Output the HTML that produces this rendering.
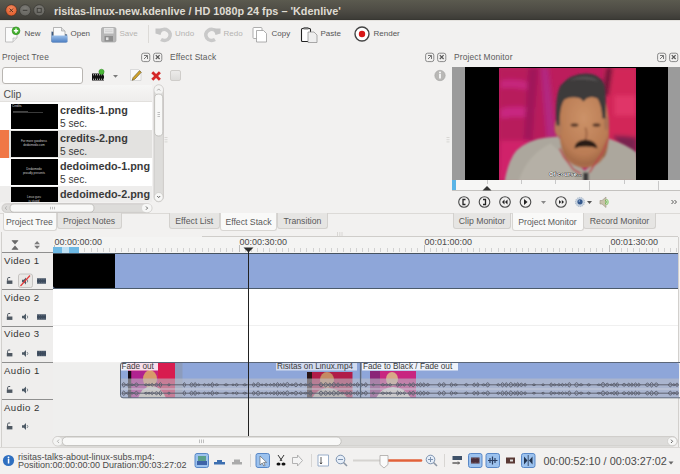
<!DOCTYPE html>
<html><head><meta charset="utf-8">
<style>
*{box-sizing:border-box;margin:0;padding:0}
html,body{width:680px;height:474px;overflow:hidden;background:#f2f1f0;font-family:"Liberation Sans",sans-serif;color:#3c3c3c}
.a{position:absolute}
.t{position:absolute;white-space:nowrap;line-height:1}
#title{left:0;top:0;width:680px;height:19.5px;background:linear-gradient(#5b5a4f,#4d4b44 55%,#3d3c37 95%,#33322e);}
.wb{position:absolute;top:5px;width:12px;height:12px;border-radius:50%}
.tb{font-size:8px;color:#555}
.dis{color:#b5b3b0}
.dh{font-size:8.4px;color:#5b5b5b;letter-spacing:.15px}
.dbtn{position:absolute;width:8px;height:8px;border:1px solid #8d8d8d;border-radius:2px;background:#eeedec}
.tab{position:absolute;height:16px;border:1px solid #d3d1ce;border-top:none;background:#e6e5e3;border-radius:0 0 3px 3px;font-size:8.7px;color:#5a5a5a;text-align:center;line-height:15px;padding-top:.5px}
.tab.sel{background:#f9f9f8;height:18px;line-height:16.5px;border-color:#d8d6d3}
.trk{position:absolute;left:0;width:678px}
.th{position:absolute;left:2px;width:51px;background:#efeeed}
.tn{font-size:9.6px;color:#333;left:4px;letter-spacing:.45px}
.fn{font-size:10.8px;font-weight:bold;color:#3a3a3a}
.fs{font-size:10.2px;color:#3a3a3a}
.rt{font-size:9px;color:#4a4a4a}
.st{font-size:9px;color:#4a4a4a}
.cl{font-size:8.2px;color:#3a3a3a}
.sep{position:absolute;background:#8f8f8f;height:1px}
</style></head><body>
<!-- title bar -->
<div id="title" class="a">
  <svg class="a" style="left:0;top:0" width="50" height="20" viewBox="0 0 50 20">
  <defs><radialGradient id="cg" cx="50%" cy="35%" r="65%"><stop offset="0" stop-color="#f38a60"/><stop offset="1" stop-color="#e05a28"/></radialGradient>
  <radialGradient id="gg" cx="50%" cy="35%" r="65%"><stop offset="0" stop-color="#7d7c77"/><stop offset="1" stop-color="#64635e"/></radialGradient></defs>
  <circle cx="11.3" cy="10.3" r="5.6" fill="url(#cg)" stroke="#3a2a22" stroke-width=".6"/>
  <path d="M9.6 8.6l3.4 3.4M13 8.6l-3.4 3.4" stroke="#4a2a1a" stroke-width=".9"/>
  <circle cx="25.1" cy="10.3" r="5.6" fill="url(#gg)" stroke="#33322e" stroke-width=".6"/>
  <path d="M22.8 10.3h4.6" stroke="#3a3935" stroke-width="1"/>
  <circle cx="39.2" cy="10.3" r="5.6" fill="url(#gg)" stroke="#33322e" stroke-width=".6"/>
  <rect x="37.2" y="8.3" width="4" height="4" fill="none" stroke="#3a3935" stroke-width=".9"/>
</svg>
  <div class="t" style="left:54px;top:6px;font-size:10.85px;font-weight:bold;color:#dfdbd2">risitas-linux-new.kdenlive / HD 1080p 24 fps – 'Kdenlive'</div>
</div>
<div class="a" style="left:0;top:19.5px;width:680px;height:1.5px;background:#e4e2de"></div>

<!-- toolbar -->
<svg class="a" style="left:0;top:20px" width="420" height="27" viewBox="0 20 420 27">
 <!-- New -->
 <path d="M5.5 27.5h11.5v10.5l-4 4h-7.5z" fill="#fbfbfb" stroke="#b9b9b9" stroke-width=".9"/><path d="M13 42v-4h4" fill="#e8e8e8" stroke="#b9b9b9" stroke-width=".7"/>
 <circle cx="16" cy="30.8" r="3.9" fill="#45b030" stroke="#2a8a1a" stroke-width=".6"/>
 <path d="M13.8 30.8h4.4M16 28.6v4.4" stroke="#fff" stroke-width="1.4"/>
 <!-- Open -->
 <defs><linearGradient id="fg" x1="0" y1="0" x2="0" y2="1"><stop offset="0" stop-color="#9cc0ea"/><stop offset="1" stop-color="#4a7cc0"/></linearGradient></defs>
 <path d="M51.5 31.5v9.5q0 1.3 1.3 1.3h13q1.3 0 1.3-1.3v-6.5z" fill="#3c5a80"/>
 <path d="M53.5 27.5h8l3.5 3.5v6h-11.5z" fill="#fafafa" stroke="#9a9a9a" stroke-width=".7"/>
 <path d="M61.5 27.5v3.5h3.5" fill="#ddd" stroke="#9a9a9a" stroke-width=".6"/>
 <path d="M51.5 35.5h16v5.7q0 1.3-1.3 1.3h-13.4q-1.3 0-1.3-1.3z" fill="url(#fg)"/>
 <!-- Save -->
 <rect x="101.5" y="27.5" width="14.5" height="14.5" rx="1.5" fill="#b6b6b6" stroke="#a8a8a8" stroke-width=".7"/>
 <rect x="104" y="28" width="9.5" height="5.5" fill="#e6e6e6"/>
 <path d="M105 29.8h7.5M105 31.6h7.5" stroke="#c0c0c0" stroke-width=".5"/>
 <rect x="104.5" y="36" width="8.5" height="5.5" fill="#8e8e8e"/>
 <rect x="106" y="37.3" width="2.5" height="2.8" fill="#e0e0e0"/>
 <!-- sep -->
 <rect x="148" y="25" width="1" height="18" fill="#dcdad7"/>
 <!-- Undo -->
 <path d="M159.5 31.5a6 5.5 0 1 1 1.5 8" fill="none" stroke="#c9c9c9" stroke-width="3.6"/>
 <path d="M155.5 28.5h7l-2 6.5-5-1.5z" fill="#c4c4c4"/>
 <!-- Redo -->
 <path d="M216.5 31.5a6 5.5 0 1 0 -1.5 8" fill="none" stroke="#c9c9c9" stroke-width="3.6"/>
 <path d="M220.5 28.5h-7l2 6.5 5-1.5z" fill="#c4c4c4"/>
 <!-- Copy -->
 <rect x="253" y="27.5" width="9" height="11" rx="1" fill="#fff" stroke="#9a9a9a" stroke-width=".8"/>
 <path d="M256.5 30.5h7l3 3v8.5h-10z" fill="#fff" stroke="#9a9a9a" stroke-width=".8"/>
 <!-- Paste -->
 <rect x="301.5" y="28.5" width="9" height="13" rx="1" fill="#fff" stroke="#222" stroke-width="1.1"/>
 <rect x="303.5" y="27" width="5" height="2.5" fill="#777"/>
 <path d="M308 32h6l3 3v7.5h-9z" fill="#eee" stroke="#888" stroke-width=".7"/>
 <!-- Render -->
 <circle cx="362" cy="34" r="7" fill="#fff" stroke="#444" stroke-width="1.4"/>
 <circle cx="362" cy="34" r="3.2" fill="#d81818"/>
</svg>
<div class="t tb" style="left:24.5px;top:30px">New</div>
<div class="t tb" style="left:70.5px;top:30px">Open</div>
<div class="t tb dis" style="left:119.5px;top:30px">Save</div>
<div class="t tb dis" style="left:175px;top:30px">Undo</div>
<div class="t tb dis" style="left:223.5px;top:30px">Redo</div>
<div class="t tb" style="left:271.5px;top:30px">Copy</div>
<div class="t tb" style="left:320.5px;top:30px">Paste</div>
<div class="t tb" style="left:373.5px;top:30px">Render</div>

<!-- dock headers -->
<div class="t dh" style="left:2px;top:53px">Project Tree</div>
<svg class="a" style="left:140.5px;top:52px" width="10" height="11" viewBox="0 0 10 11"><rect x=".6" y="1.2" width="8.2" height="8.4" rx="2" fill="none" stroke="#8a8a8a" stroke-width="1"/><path d="M3 3.5h3.5v3.5M6.5 3.5l-3.5 3.5" fill="none" stroke="#777" stroke-width="1"/></svg><svg class="a" style="left:153px;top:52px" width="10" height="11" viewBox="0 0 10 11"><rect x=".6" y="1.2" width="8.2" height="8.4" rx="2" fill="none" stroke="#8a8a8a" stroke-width="1"/><path d="M2.8 3.2l3.8 3.8M6.6 3.2l-3.8 3.8" fill="none" stroke="#555" stroke-width="1.2"/></svg>
<div class="t dh" style="left:170px;top:53px">Effect Stack</div>
<svg class="a" style="left:424.5px;top:52px" width="10" height="11" viewBox="0 0 10 11"><rect x=".6" y="1.2" width="8.2" height="8.4" rx="2" fill="none" stroke="#8a8a8a" stroke-width="1"/><path d="M3 3.5h3.5v3.5M6.5 3.5l-3.5 3.5" fill="none" stroke="#777" stroke-width="1"/></svg><svg class="a" style="left:437px;top:52px" width="10" height="11" viewBox="0 0 10 11"><rect x=".6" y="1.2" width="8.2" height="8.4" rx="2" fill="none" stroke="#8a8a8a" stroke-width="1"/><path d="M2.8 3.2l3.8 3.8M6.6 3.2l-3.8 3.8" fill="none" stroke="#555" stroke-width="1.2"/></svg>
<div class="t dh" style="left:454px;top:53px">Project Monitor</div>
<svg class="a" style="left:656.5px;top:52px" width="10" height="11" viewBox="0 0 10 11"><rect x=".6" y="1.2" width="8.2" height="8.4" rx="2" fill="none" stroke="#8a8a8a" stroke-width="1"/><path d="M3 3.5h3.5v3.5M6.5 3.5l-3.5 3.5" fill="none" stroke="#777" stroke-width="1"/></svg><svg class="a" style="left:669px;top:52px" width="10" height="11" viewBox="0 0 10 11"><rect x=".6" y="1.2" width="8.2" height="8.4" rx="2" fill="none" stroke="#8a8a8a" stroke-width="1"/><path d="M2.8 3.2l3.8 3.8M6.6 3.2l-3.8 3.8" fill="none" stroke="#555" stroke-width="1.2"/></svg>
<!-- search -->
<div class="a" style="left:1.5px;top:67px;width:81px;height:16.5px;background:#fff;border:1px solid #b9b6b2;border-radius:3px"></div>
<svg class="a" style="left:88px;top:66px" width="76" height="18" viewBox="88 66 76 18">
 <rect x="92" y="73.5" width="12" height="7" fill="#111"/>
 <rect x="93.0" y="74.3" width="1" height="1" fill="#ddd"/><rect x="93.0" y="78.7" width="1" height="1" fill="#ddd"/><rect x="95.0" y="74.3" width="1" height="1" fill="#ddd"/><rect x="95.0" y="78.7" width="1" height="1" fill="#ddd"/><rect x="97.0" y="74.3" width="1" height="1" fill="#ddd"/><rect x="97.0" y="78.7" width="1" height="1" fill="#ddd"/><rect x="99.0" y="74.3" width="1" height="1" fill="#ddd"/><rect x="99.0" y="78.7" width="1" height="1" fill="#ddd"/><rect x="101.0" y="74.3" width="1" height="1" fill="#ddd"/><rect x="101.0" y="78.7" width="1" height="1" fill="#ddd"/><rect x="103.0" y="74.3" width="1" height="1" fill="#ddd"/><rect x="103.0" y="78.7" width="1" height="1" fill="#ddd"/>
 <circle cx="101.5" cy="71.8" r="2.6" fill="#4cb83a" stroke="#2f8a22" stroke-width=".5"/>
 <path d="M113 75h5l-2.5 2.8z" fill="#7a7a7a"/>
 <path d="M130.5 69.5h8l2.5 2.5v8.5h-10.5z" fill="#fafafa" stroke="#c8c8c8" stroke-width=".6"/>
 <path d="M132.2 80.3l.8-2.6 6.5-7 1.8 1.6-6.6 7z" fill="#d4a52a" stroke="#5a4a1a" stroke-width=".6"/>
 <path d="M152.3 72.2l7.6 7.6M159.9 72.2l-7.6 7.6" stroke="#d42828" stroke-width="2.8"/>
</svg>
<!-- tree -->
<div class="a" style="left:0;top:85px;width:163px;height:118px;background:#fff"></div>
<div class="a" style="left:0;top:85px;width:152px;height:17px;background:linear-gradient(#f6f6f5,#eeedec);border-bottom:1px solid #e2e0dd"></div>
<div class="t" style="left:3.5px;top:90px;font-size:10.4px;color:#4f4f4f">Clip</div>

<!-- rows -->
<div class="a" style="left:0;top:130px;width:152px;height:28px;background:#e3e2e0"></div>
<div class="a" style="left:0;top:186px;width:152px;height:17px;background:#eeedec"></div>
<div class="a" style="left:0;top:130px;width:9px;height:28px;background:#f07746"></div>
<div class="a" style="left:11px;top:103.5px;width:46.5px;height:25px;background:#000"></div>
<div class="a" style="left:11px;top:131px;width:46.5px;height:26px;background:#000"></div>
<div class="a" style="left:11px;top:159px;width:46.5px;height:26px;background:#000"></div>
<div class="a" style="left:11px;top:187px;width:46.5px;height:15px;background:#000"></div>
<div class="t" style="left:12px;top:105px;font-size:3px;color:#ddd">Credits</div>
<div class="a" style="left:13px;top:110.5px;width:15px;height:1px;background:#444"></div>
<div class="a" style="left:13px;top:112px;width:30px;height:1px;background:#3a3a3a"></div>
<div class="t" style="left:34px;top:140px;font-size:3px;color:#ccc;text-align:center;transform:translateX(-50%);line-height:1.3">For more goodness<br>dedoimedo.com</div>
<div class="t" style="left:34px;top:168px;font-size:3px;color:#ccc;text-align:center;transform:translateX(-50%);line-height:1.3">Dedoimedo<br>proudly presents</div>
<div class="t" style="left:34px;top:196px;font-size:3px;color:#ccc;text-align:center;transform:translateX(-50%);line-height:1.3">Linux guru<br>is stupid</div>
<div class="t fn" style="left:60px;top:105px">credits-1.png</div>
<div class="t fs" style="left:60px;top:119px">5 sec.</div>
<div class="t fn" style="left:60px;top:133px">credits-2.png</div>
<div class="t fs" style="left:60px;top:147px">5 sec.</div>
<div class="t fn" style="left:60px;top:161px">dedoimedo-1.png</div>
<div class="t fs" style="left:60px;top:175px">5 sec.</div>
<div class="t fn" style="left:60px;top:189px">dedoimedo-2.png</div>
<div class="a" style="left:1px;top:202px;width:162px;height:11px;background:#f2f1f0"></div>
<!-- vscroll -->
<div class="a" style="left:152px;top:84px;width:12px;height:119px;background:#f2f1f0"></div>
<svg class="a" style="left:150px;top:82px" width="16" height="133" viewBox="150 82 16 133">
 <rect x="154" y="84.8" width="9.4" height="117" rx="4.7" fill="#dddcda" stroke="#c6c4c1" stroke-width=".8"/>
 <rect x="154.4" y="85.2" width="8.6" height="9" rx="4.3" fill="#f4f4f3"/>
 <path d="M157.2 90.5l1.5-1.6 1.5 1.6" fill="none" stroke="#888" stroke-width=".7"/>
 <rect x="154.4" y="192.5" width="8.6" height="9" rx="4.3" fill="#f7f7f6" stroke="#c6c4c1" stroke-width=".6"/>
 <path d="M157.2 196l1.5 1.6 1.5-1.6" fill="none" stroke="#555" stroke-width=".9"/>
 <rect x="154.6" y="94" width="8.2" height="42" rx="4.1" fill="#f8f8f7" stroke="#b9b7b4" stroke-width=".8"/>
 <path d="M157.5 112.5h2.5M157.5 114.5h2.5M157.5 116.5h2.5" stroke="#999" stroke-width=".6"/>
 </svg><svg class="a" style="left:0;top:200px" width="154" height="15" viewBox="0 200 154 15">
 <rect x="2" y="203.8" width="150" height="8.6" rx="4.3" fill="#dddcda" stroke="#c6c4c1" stroke-width=".8"/>
 <rect x="142" y="204" width="9.6" height="8.2" rx="4.1" fill="#f7f7f6"/>
 <path d="M146 206.5l1.6 1.6-1.6 1.6" fill="none" stroke="#555" stroke-width=".9"/>
 <path d="M6.8 206.5l-1.6 1.6 1.6 1.6" fill="none" stroke="#999" stroke-width=".7"/>
 <rect x="10" y="204" width="84" height="8.2" rx="4.1" fill="#f8f8f7" stroke="#b9b7b4" stroke-width=".8"/>
 <path d="M50.5 206.8v2.6M52.5 206.8v2.6M54.5 206.8v2.6" stroke="#999" stroke-width=".6"/>
</svg>
<!-- effect stack -->
<div class="a" style="left:170px;top:70px;width:11px;height:10.5px;border:1px solid #cfcdca;border-radius:2px;background:linear-gradient(#ecebea,#dddcda)"></div>
<svg class="a" style="left:433px;top:69px" width="14" height="13" viewBox="433 69 14 13">
 <circle cx="440" cy="75.5" r="5.2" fill="#b9b8b6" stroke="#a5a4a2" stroke-width=".6"/>
 <rect x="439.2" y="74" width="1.6" height="4.5" fill="#fff"/>
 <circle cx="440" cy="72.5" r=".9" fill="#fff"/>
</svg>
<!-- monitor -->
<div class="a" style="left:452px;top:67px;width:228px;height:113px;background:#9b9b9b"></div>
<div class="a" style="left:465px;top:67px;width:202.5px;height:113px;background:#000"></div>

<svg class="a" style="left:498.5px;top:67.5px" width="137.5" height="112.5" viewBox="498.5 67.5 137.5 112.5">
 <defs>
  <filter id="vb" x="-20%" y="-20%" width="140%" height="140%"><feGaussianBlur stdDeviation="2.2"/></filter>
  <filter id="vb2" x="-20%" y="-20%" width="140%" height="140%"><feGaussianBlur stdDeviation=".8"/></filter>
  <radialGradient id="skin" cx="50%" cy="35%" r="65%"><stop offset="0" stop-color="#cc9268"/><stop offset=".75" stop-color="#ba7c54"/><stop offset="1" stop-color="#9c6444"/></radialGradient>
  <clipPath id="vc"><rect x="498.5" y="67.5" width="137.5" height="112.5"/></clipPath>
 </defs>
 <g clip-path="url(#vc)">
 <rect x="498" y="67" width="139" height="114" fill="#bc1d5c"/>
 <g filter="url(#vb)">
  <path d="M498 67h50v113h-50z" fill="#b81a5c"/>
  <path d="M500 80q15-3 30 2l-2 8q-14-4-28-2z" fill="#cc2c8c" opacity=".7"/>
  <path d="M500 108q15-4 35 0l-2 10q-16-3-33 0z" fill="#cf2e90" opacity=".7"/>
  <path d="M528 67h10l-8 90h-8z" fill="#a0185a"/>
  <path d="M540 67h8l8 70h-10z" fill="#b02a8a" opacity=".8"/>
  <path d="M500 140h30l-5 40h-27z" fill="#d0206a"/>
  <path d="M604 67h32v113h-32z" fill="#d22858"/>
  <path d="M606 67l6 0-4 28-6 0z" fill="#6a1838"/>
  <path d="M614 95h22v20h-22z" fill="#e03468"/>
  <path d="M612 135q14 0 24 2v20h-10z" fill="#7a2050"/>
 </g>
 <g filter="url(#vb2)">
  <!-- sweater -->
  <path d="M504 181q4-22 12-31q12-11 30-13l12-1l10 20l16 14l12-8l12-24q18 6 28 14l2 29z" fill="#aca79d"/>
  <path d="M518 181q8-26 32-38l14 12 12 26z" fill="#b5b0a6"/>
  <!-- face -->
  <path d="M558 100q10-8 26-8q15 0 21 8q4 16 3.5 34q-.5 16-4 22q-8 10-20 10q-13 0-20-10q-4-6-5.5-20q-1.5-18 0-36z" fill="url(#skin)"/>
  <ellipse cx="558" cy="127" rx="4" ry="9" fill="#b47a58"/>
  <ellipse cx="606" cy="123" rx="2.5" ry="7" fill="#a87252"/>
  <!-- hair -->
  <path d="M556 125q-2-28 4-40q10-12 26-12q13 0 18 11q2 12 1 34l-3 0q-1-14-5-20q-6-3-11 0l-3 3l-3-3q-9-3-16 1q-5 6-5 26z" fill="#3d3a3b"/>
  <path d="M568 80q8-4 18-4q9 1 12 5q-9-2-16-2q-8 0-14 1z" fill="#6a6868" opacity=".5"/>
  <!-- eyes -->
  <ellipse cx="574" cy="124.5" rx="4" ry="1.8" fill="#5a3a2a"/>
  <ellipse cx="596" cy="124.5" rx="4" ry="1.8" fill="#5a3a2a"/>
  <path d="M585 127q2 7 0 12" stroke="#a46a48" stroke-width="2.2" fill="none"/>
  <!-- mustache -->
  <path d="M574 148q0-8 11-9q11 1 12 9q-4-2-12-2q-7 0-11 2z" fill="#2a1d19"/>
  <path d="M566 156q7 10 18 10q12 0 18-10" stroke="#aa6e4c" stroke-width="3" fill="none"/>
  <!-- collar -->
  <path d="M559 148l4 8 10 13 7 4M608 138l-6 14-13 20" stroke="#b8404a" stroke-width="1.5" fill="none"/>
  <rect x="582.5" y="172" width="5.5" height="9" fill="#3a3a3a"/>
 </g>
 <text x="548.5" y="175.2" font-family="Liberation Sans" font-size="6.2" font-weight="bold" fill="#fff" stroke="#111" stroke-width=".7" paint-order="stroke" textLength="33" lengthAdjust="spacingAndGlyphs">Of course...</text>
 </g>
</svg>

<!-- monitor ruler -->
<div class="a" style="left:452px;top:180px;width:228px;height:10.5px;background:#f6f6f5;border-bottom:1px solid #c4c2bf"></div>
<div class="a" style="left:452px;top:180px;width:4px;height:10px;background:#5ab4e6"></div>
<div class="a" style="left:486.5px;top:180px;width:1px;height:4px;background:#c8c8c8"></div>
<div class="a" style="left:521px;top:180px;width:1px;height:4px;background:#c8c8c8"></div>
<div class="a" style="left:555px;top:180px;width:1px;height:4px;background:#c8c8c8"></div>
<div class="a" style="left:589px;top:181px;width:1px;height:8.5px;background:#c8c8c8"></div>
<div class="a" style="left:624px;top:180px;width:1px;height:4px;background:#c8c8c8"></div>
<div class="a" style="left:658px;top:181px;width:1px;height:8.5px;background:#c8c8c8"></div>
<svg class="a" style="left:480px;top:184px" width="14" height="7" viewBox="480 184 14 7"><path d="M482.5 190.5l4.5-4.5 4.5 4.5z" fill="#333"/></svg>
<!-- monitor buttons -->
<svg class="a" style="left:452px;top:192px" width="228" height="20" viewBox="452 192 228 20">
 <g fill="none" stroke="#4a4a4a" stroke-width="1.1">
  <circle cx="464" cy="202" r="5.3"/><circle cx="484.5" cy="202" r="5.3"/><circle cx="505" cy="202" r="5.3"/><circle cx="525.5" cy="202" r="5.3"/><circle cx="561" cy="202" r="5.3"/>
 </g>
 <path d="M465.5 199.5h-2.5v5h2.5" fill="none" stroke="#222" stroke-width="1.3"/>
 <path d="M483 199.5h2.5v5h-2.5" fill="none" stroke="#222" stroke-width="1.3"/>
 <path d="M504.5 199.5l-2.5 2.5 2.5 2.5zM507.5 199.5l-2.5 2.5 2.5 2.5z" fill="#222"/>
 <path d="M524 199l3.5 3-3.5 3z" fill="#222"/>
 <path d="M541 201h5l-2.5 3z" fill="#888"/>
 <path d="M559 200l2.2 2-2.2 2zM561.8 200l2.2 2-2.2 2z" fill="#222"/>
 <circle cx="580" cy="202" r="4.6" fill="#c4d0de" stroke="#9fb0c4" stroke-width=".8" stroke-dasharray="1.2 .8"/><circle cx="580" cy="201.8" r="2.6" fill="#34588c"/><circle cx="579.3" cy="201" r=".8" fill="#9ab4d8"/>
 <path d="M587 201h5l-2.5 3z" fill="#555"/>
 <path d="M600 200.5h2l4-3.5v10.5l-4-3.5h-2z" fill="#c9c2ab" stroke="#9a9484" stroke-width=".6"/>
 <path d="M605 200a2.2 2.2 0 0 1 0 4M606.5 199a3.6 3.6 0 0 1 0 6" fill="none" stroke="#62c040" stroke-width=".9"/>
 <path d="M671.5 200l2 2-2 2M674.5 200l2 2-2 2" fill="none" stroke="#444" stroke-width=".9"/>
</svg>
<!-- tabs -->
<div class="a" style="left:0;top:212.5px;width:680px;height:1px;background:#dcdad7"></div>
<div class="tab sel" style="left:2.5px;top:213px;width:54px">Project Tree</div>
<div class="tab" style="left:56.5px;top:213px;width:65px">Project Notes</div>
<div class="tab" style="left:168.5px;top:213px;width:51.5px">Effect List</div>
<div class="tab sel" style="left:220px;top:213px;width:57px">Effect Stack</div>
<div class="tab" style="left:277px;top:213px;width:51px">Transition</div>
<div class="tab" style="left:453px;top:213px;width:58px">Clip Monitor</div>
<div class="tab sel" style="left:511.5px;top:213px;width:72px">Project Monitor</div>
<div class="tab" style="left:583px;top:213px;width:73px">Record Monitor</div>


<svg class="a" style="left:0;top:0" width="680" height="474" viewBox="0 0 680 474" style="pointer-events:none">
 <path d="M337.5 232v7M339.8 232v7M342 232v7" stroke="#d2d0cd" stroke-width=".8"/>
 <path d="M164.5 137.5h3M164.5 139.7h3M164.5 141.9h3" stroke="#d2d0cd" stroke-width=".8"/>
 <path d="M446.5 137.5h3M446.5 139.7h3M446.5 141.9h3" stroke="#d2d0cd" stroke-width=".8"/>
</svg>
<!-- timeline -->
<div class="a" style="left:202px;top:236px;width:476px;height:1px;background:#cfcdca"></div>
<div class="a" style="left:53px;top:237px;width:625px;height:15.5px;background:#f4f4f3"></div>
<div class="a" style="left:1px;top:232px;width:1px;height:215px;background:#d2d0cd"></div>
<div class="a" style="left:677.5px;top:237px;width:1px;height:210px;background:#d2d0cd"></div>
<div class="a" style="left:53.50px;top:245px;width:1px;height:7px;background:#bdbdbd"></div>
<div class="a" style="left:59.67px;top:248px;width:1px;height:4px;background:#d2d2d2"></div>
<div class="a" style="left:65.83px;top:248px;width:1px;height:4px;background:#d2d2d2"></div>
<div class="a" style="left:72.00px;top:248px;width:1px;height:4px;background:#d2d2d2"></div>
<div class="a" style="left:78.17px;top:248px;width:1px;height:4px;background:#d2d2d2"></div>
<div class="a" style="left:84.33px;top:248px;width:1px;height:4px;background:#d2d2d2"></div>
<div class="a" style="left:90.50px;top:248px;width:1px;height:4px;background:#d2d2d2"></div>
<div class="a" style="left:96.67px;top:248px;width:1px;height:4px;background:#d2d2d2"></div>
<div class="a" style="left:102.83px;top:248px;width:1px;height:4px;background:#d2d2d2"></div>
<div class="a" style="left:109.00px;top:248px;width:1px;height:4px;background:#d2d2d2"></div>
<div class="a" style="left:115.17px;top:248px;width:1px;height:4px;background:#d2d2d2"></div>
<div class="a" style="left:121.33px;top:248px;width:1px;height:4px;background:#d2d2d2"></div>
<div class="a" style="left:127.50px;top:248px;width:1px;height:4px;background:#d2d2d2"></div>
<div class="a" style="left:133.67px;top:248px;width:1px;height:4px;background:#d2d2d2"></div>
<div class="a" style="left:139.83px;top:248px;width:1px;height:4px;background:#d2d2d2"></div>
<div class="a" style="left:146.00px;top:248px;width:1px;height:4px;background:#d2d2d2"></div>
<div class="a" style="left:152.17px;top:248px;width:1px;height:4px;background:#d2d2d2"></div>
<div class="a" style="left:158.33px;top:248px;width:1px;height:4px;background:#d2d2d2"></div>
<div class="a" style="left:164.50px;top:248px;width:1px;height:4px;background:#d2d2d2"></div>
<div class="a" style="left:170.67px;top:248px;width:1px;height:4px;background:#d2d2d2"></div>
<div class="a" style="left:176.83px;top:248px;width:1px;height:4px;background:#d2d2d2"></div>
<div class="a" style="left:183.00px;top:248px;width:1px;height:4px;background:#d2d2d2"></div>
<div class="a" style="left:189.17px;top:248px;width:1px;height:4px;background:#d2d2d2"></div>
<div class="a" style="left:195.33px;top:248px;width:1px;height:4px;background:#d2d2d2"></div>
<div class="a" style="left:201.50px;top:248px;width:1px;height:4px;background:#d2d2d2"></div>
<div class="a" style="left:207.67px;top:248px;width:1px;height:4px;background:#d2d2d2"></div>
<div class="a" style="left:213.83px;top:248px;width:1px;height:4px;background:#d2d2d2"></div>
<div class="a" style="left:220.00px;top:248px;width:1px;height:4px;background:#d2d2d2"></div>
<div class="a" style="left:226.17px;top:248px;width:1px;height:4px;background:#d2d2d2"></div>
<div class="a" style="left:232.33px;top:248px;width:1px;height:4px;background:#d2d2d2"></div>
<div class="a" style="left:238.50px;top:245px;width:1px;height:7px;background:#bdbdbd"></div>
<div class="a" style="left:244.67px;top:248px;width:1px;height:4px;background:#d2d2d2"></div>
<div class="a" style="left:250.83px;top:248px;width:1px;height:4px;background:#d2d2d2"></div>
<div class="a" style="left:257.00px;top:248px;width:1px;height:4px;background:#d2d2d2"></div>
<div class="a" style="left:263.17px;top:248px;width:1px;height:4px;background:#d2d2d2"></div>
<div class="a" style="left:269.33px;top:248px;width:1px;height:4px;background:#d2d2d2"></div>
<div class="a" style="left:275.50px;top:248px;width:1px;height:4px;background:#d2d2d2"></div>
<div class="a" style="left:281.67px;top:248px;width:1px;height:4px;background:#d2d2d2"></div>
<div class="a" style="left:287.83px;top:248px;width:1px;height:4px;background:#d2d2d2"></div>
<div class="a" style="left:294.00px;top:248px;width:1px;height:4px;background:#d2d2d2"></div>
<div class="a" style="left:300.17px;top:248px;width:1px;height:4px;background:#d2d2d2"></div>
<div class="a" style="left:306.33px;top:248px;width:1px;height:4px;background:#d2d2d2"></div>
<div class="a" style="left:312.50px;top:248px;width:1px;height:4px;background:#d2d2d2"></div>
<div class="a" style="left:318.67px;top:248px;width:1px;height:4px;background:#d2d2d2"></div>
<div class="a" style="left:324.83px;top:248px;width:1px;height:4px;background:#d2d2d2"></div>
<div class="a" style="left:331.00px;top:248px;width:1px;height:4px;background:#d2d2d2"></div>
<div class="a" style="left:337.17px;top:248px;width:1px;height:4px;background:#d2d2d2"></div>
<div class="a" style="left:343.33px;top:248px;width:1px;height:4px;background:#d2d2d2"></div>
<div class="a" style="left:349.50px;top:248px;width:1px;height:4px;background:#d2d2d2"></div>
<div class="a" style="left:355.67px;top:248px;width:1px;height:4px;background:#d2d2d2"></div>
<div class="a" style="left:361.83px;top:248px;width:1px;height:4px;background:#d2d2d2"></div>
<div class="a" style="left:368.00px;top:248px;width:1px;height:4px;background:#d2d2d2"></div>
<div class="a" style="left:374.17px;top:248px;width:1px;height:4px;background:#d2d2d2"></div>
<div class="a" style="left:380.33px;top:248px;width:1px;height:4px;background:#d2d2d2"></div>
<div class="a" style="left:386.50px;top:248px;width:1px;height:4px;background:#d2d2d2"></div>
<div class="a" style="left:392.67px;top:248px;width:1px;height:4px;background:#d2d2d2"></div>
<div class="a" style="left:398.83px;top:248px;width:1px;height:4px;background:#d2d2d2"></div>
<div class="a" style="left:405.00px;top:248px;width:1px;height:4px;background:#d2d2d2"></div>
<div class="a" style="left:411.17px;top:248px;width:1px;height:4px;background:#d2d2d2"></div>
<div class="a" style="left:417.33px;top:248px;width:1px;height:4px;background:#d2d2d2"></div>
<div class="a" style="left:423.50px;top:245px;width:1px;height:7px;background:#bdbdbd"></div>
<div class="a" style="left:429.67px;top:248px;width:1px;height:4px;background:#d2d2d2"></div>
<div class="a" style="left:435.83px;top:248px;width:1px;height:4px;background:#d2d2d2"></div>
<div class="a" style="left:442.00px;top:248px;width:1px;height:4px;background:#d2d2d2"></div>
<div class="a" style="left:448.17px;top:248px;width:1px;height:4px;background:#d2d2d2"></div>
<div class="a" style="left:454.33px;top:248px;width:1px;height:4px;background:#d2d2d2"></div>
<div class="a" style="left:460.50px;top:248px;width:1px;height:4px;background:#d2d2d2"></div>
<div class="a" style="left:466.67px;top:248px;width:1px;height:4px;background:#d2d2d2"></div>
<div class="a" style="left:472.83px;top:248px;width:1px;height:4px;background:#d2d2d2"></div>
<div class="a" style="left:479.00px;top:248px;width:1px;height:4px;background:#d2d2d2"></div>
<div class="a" style="left:485.17px;top:248px;width:1px;height:4px;background:#d2d2d2"></div>
<div class="a" style="left:491.33px;top:248px;width:1px;height:4px;background:#d2d2d2"></div>
<div class="a" style="left:497.50px;top:248px;width:1px;height:4px;background:#d2d2d2"></div>
<div class="a" style="left:503.67px;top:248px;width:1px;height:4px;background:#d2d2d2"></div>
<div class="a" style="left:509.83px;top:248px;width:1px;height:4px;background:#d2d2d2"></div>
<div class="a" style="left:516.00px;top:248px;width:1px;height:4px;background:#d2d2d2"></div>
<div class="a" style="left:522.17px;top:248px;width:1px;height:4px;background:#d2d2d2"></div>
<div class="a" style="left:528.33px;top:248px;width:1px;height:4px;background:#d2d2d2"></div>
<div class="a" style="left:534.50px;top:248px;width:1px;height:4px;background:#d2d2d2"></div>
<div class="a" style="left:540.67px;top:248px;width:1px;height:4px;background:#d2d2d2"></div>
<div class="a" style="left:546.83px;top:248px;width:1px;height:4px;background:#d2d2d2"></div>
<div class="a" style="left:553.00px;top:248px;width:1px;height:4px;background:#d2d2d2"></div>
<div class="a" style="left:559.17px;top:248px;width:1px;height:4px;background:#d2d2d2"></div>
<div class="a" style="left:565.33px;top:248px;width:1px;height:4px;background:#d2d2d2"></div>
<div class="a" style="left:571.50px;top:248px;width:1px;height:4px;background:#d2d2d2"></div>
<div class="a" style="left:577.67px;top:248px;width:1px;height:4px;background:#d2d2d2"></div>
<div class="a" style="left:583.83px;top:248px;width:1px;height:4px;background:#d2d2d2"></div>
<div class="a" style="left:590.00px;top:248px;width:1px;height:4px;background:#d2d2d2"></div>
<div class="a" style="left:596.17px;top:248px;width:1px;height:4px;background:#d2d2d2"></div>
<div class="a" style="left:602.33px;top:248px;width:1px;height:4px;background:#d2d2d2"></div>
<div class="a" style="left:608.50px;top:245px;width:1px;height:7px;background:#bdbdbd"></div>
<div class="a" style="left:614.67px;top:248px;width:1px;height:4px;background:#d2d2d2"></div>
<div class="a" style="left:620.83px;top:248px;width:1px;height:4px;background:#d2d2d2"></div>
<div class="a" style="left:627.00px;top:248px;width:1px;height:4px;background:#d2d2d2"></div>
<div class="a" style="left:633.17px;top:248px;width:1px;height:4px;background:#d2d2d2"></div>
<div class="a" style="left:639.33px;top:248px;width:1px;height:4px;background:#d2d2d2"></div>
<div class="a" style="left:645.50px;top:248px;width:1px;height:4px;background:#d2d2d2"></div>
<div class="a" style="left:651.67px;top:248px;width:1px;height:4px;background:#d2d2d2"></div>
<div class="a" style="left:657.83px;top:248px;width:1px;height:4px;background:#d2d2d2"></div>
<div class="a" style="left:664.00px;top:248px;width:1px;height:4px;background:#d2d2d2"></div>
<div class="a" style="left:670.17px;top:248px;width:1px;height:4px;background:#d2d2d2"></div>
<div class="a" style="left:676.33px;top:248px;width:1px;height:4px;background:#d2d2d2"></div>
<div class="a" style="left:53px;top:247px;width:25.5px;height:5.5px;background:#6db9e4"></div>
<div class="a" style="left:62px;top:247px;width:6.5px;height:5.5px;background:#bfe0f3"></div>
<div class="t rt" style="left:54.5px;top:238px">00:00:00:00</div>
<div class="t rt" style="left:239.5px;top:238px">00:00:30:00</div>
<div class="t rt" style="left:424.5px;top:238px">00:01:00:00</div>
<div class="t rt" style="left:610.5px;top:238px">00:01:30:00</div>
<svg class="a" style="left:8px;top:238px" width="40" height="14" viewBox="8 238 40 14">
 <path d="M12 241h6l-3 3.5zM12 249h6l-3-3.5z" fill="#6a6a6a"/>
 <path d="M11.8 240.6h6.4M11.8 249.4h6.4" stroke="#6a6a6a" stroke-width=".9"/>
 <path d="M34.2 244.3l2.9-3.2 2.9 3.2zM34.2 245.7l2.9 3.2 2.9-3.2z" fill="#7a7a7a"/>
</svg>
<!-- tracks -->
<div class="a" style="left:53px;top:252.5px;width:625px;height:36.5px;background:#fff"></div>
<div class="a" style="left:53px;top:289px;width:625px;height:73px;background:#fff"></div>
<div class="a" style="left:53px;top:325px;width:625px;height:1px;background:#f0f0f0"></div>
<div class="a" style="left:53px;top:362.5px;width:625px;height:73px;background:#efefee"></div>
<div class="a" style="left:2px;top:252.5px;width:51px;height:183px;background:#efeeed"></div>
<div class="sep" style="left:2px;top:252px;width:51px"></div>
<div class="sep" style="left:2px;top:289px;width:51px"></div>
<div class="sep" style="left:2px;top:325.5px;width:51px"></div>
<div class="sep" style="left:2px;top:362px;width:51px"></div>
<div class="sep" style="left:2px;top:399px;width:51px"></div>
<div class="sep" style="left:2px;top:435.5px;width:51px"></div>
<div class="t tn" style="top:256.2px">Video 1</div>
<div class="t tn" style="top:292.8px">Video 2</div>
<div class="t tn" style="top:329.4px">Video 3</div>
<div class="t tn" style="top:366px">Audio 1</div>
<div class="t tn" style="top:402.6px">Audio 2</div>
<!-- video 1 clip -->
<div class="a" style="left:53px;top:252.5px;width:625px;height:36px;background:#8ea6d9;border-top:1px solid #46525f;border-bottom:1.5px solid #4b5a6b"></div>
<div class="a" style="left:53px;top:253.5px;width:62px;height:34px;background:#000;border-radius:0 0 0 2px"></div>

<!-- track icons -->
<svg class="a" style="left:0;top:270px" width="53" height="160" viewBox="0 270 53 160">
 <defs>
  <g id="lock"><path d="M-3.2 0h5.6v3.4h-5.6z" fill="#4f5862"/><path d="M-2.4 0.2v-2q0-1.2 1.2-1.2h1.4" fill="none" stroke="#4f5862" stroke-width="1"/></g>
  <g id="spk"><path d="M-3 -1.3h1.8l2.2-2.2v7l-2.2-2.2h-1.8z" fill="#4d5a66"/><path d="M2 -1.5a2 2 0 0 1 0 3" fill="none" stroke="#4d5a66" stroke-width=".7"/></g>
  <g id="film"><rect x="-4.5" y="-2.7" width="9" height="5.4" fill="#3c4a5c"/><path d="M-4.2 -1.7h8.6M-4.2 1.7h8.6" stroke="#8a98a8" stroke-width=".5" stroke-dasharray=".9 .9"/></g>
 </defs>
 <use href="#lock" x="10" y="280.5"/>
 <rect x="18.5" y="274" width="14" height="13.5" rx="2" fill="#e9e8e6" stroke="#bcbab7" stroke-width=".8"/>
 <use href="#spk" x="25" y="281"/>
 <path d="M20.5 286l9.5-10.5" stroke="#e23a3a" stroke-width="1.2"/>
 <use href="#film" x="41.5" y="281"/>
 <use href="#lock" x="10" y="316.5"/><use href="#spk" x="25" y="317"/><use href="#film" x="41.5" y="317"/>
 <use href="#lock" x="10" y="353"/><use href="#spk" x="25" y="353.5"/><use href="#film" x="41.5" y="353.5"/>
 <use href="#lock" x="10" y="389.5"/><use href="#spk" x="25" y="390"/>
 <use href="#lock" x="10" y="426"/><use href="#spk" x="25" y="426.5"/>
</svg>
<!-- audio clip -->

<svg class="a" style="left:120px;top:362px" width="560" height="37" viewBox="120 362 560 37">
 <defs><clipPath id="cc"><rect x="121" y="363" width="558" height="34.5" rx="2"/></clipPath>
 <filter id="bl1" x="-10%" y="-10%" width="120%" height="120%"><feGaussianBlur stdDeviation=".6"/></filter></defs>
 <g clip-path="url(#cc)">
  <rect x="120" y="362" width="560" height="37" fill="#8ea6d9"/>
  <rect x="175" y="363" width="7.5" height="35" fill="#8c9cbd"/>
  <rect x="360" y="363" width="2" height="35" fill="#8c9cbd"/>
  <g filter="url(#bl1)">
   <rect x="128" y="363" width="47" height="35" fill="#c8207a"/>
   <rect x="128" y="371" width="3.5" height="27" fill="#151015"/>
   <rect x="131.5" y="371" width="16" height="27" fill="#b02090"/>
   <rect x="158" y="363" width="17" height="35" fill="#d81e50"/>
   <ellipse cx="150" cy="379" rx="7" ry="9" fill="#d89a6a"/>
   <path d="M138 398q4-11 13-12q10 0 15 12z" fill="#d8d0c0"/>
   <rect x="307" y="372" width="45.5" height="26" fill="#b01e48"/>
   <rect x="307" y="372" width="5" height="26" fill="#2a1518"/>
   <ellipse cx="327" cy="380" rx="7" ry="8" fill="#c48a64"/>
   <path d="M312 398q6-10 16-10t20 10z" fill="#b8b0a4"/>
   <rect x="370" y="371" width="46" height="27" fill="#c82680"/>
   <rect x="370" y="371" width="10" height="27" fill="#8a2878"/>
   <ellipse cx="392" cy="379" rx="6" ry="7" fill="#d8a888"/>
   <path d="M376 398q6-11 17-11t18 11z" fill="#e0d8d0"/>
  </g>
  <rect x="120" y="378.5" width="560" height="20" fill="#bcc0c8" fill-opacity=".6"/><rect x="120" y="388" width="560" height="2" fill="#d0d4de" fill-opacity=".4"/>
  <path d="M122 384.8H678M122.0 384.8q1.7 -4.4 3.5 0q-1.7 4.4 -3.5 0M126.0 384.8q1.8 -2.2 3.6 0q-1.8 2.2 -3.6 0M130.0 384.8q2.0 -1.9 4.0 0q-2.0 1.9 -4.0 0M134.3 384.8q2.0 -3.7 4.1 0q-2.0 3.7 -4.1 0M144.3 384.8q1.8 -2.1 3.6 0q-1.8 2.1 -3.6 0M147.9 384.8q1.2 -2.2 2.3 0q-1.2 2.2 -2.3 0M150.5 384.8q1.6 -2.9 3.3 0q-1.6 2.9 -3.3 0M154.6 384.8q1.8 -3.1 3.7 0q-1.8 3.1 -3.7 0M159.0 384.8q1.4 -4.6 2.8 0q-1.4 4.6 -2.8 0M167.6 384.8q1.4 -2.5 2.7 0q-1.4 2.5 -2.7 0M183.0 384.8q1.3 -4.3 2.7 0q-1.3 4.3 -2.7 0M189.7 384.8q1.8 -3.9 3.6 0q-1.8 3.9 -3.6 0M193.6 384.8q1.5 -4.5 3.0 0q-1.5 4.5 -3.0 0M197.3 384.8q1.4 -1.9 2.8 0q-1.4 1.9 -2.8 0M202.9 384.8q1.6 -2.2 3.2 0q-1.6 2.2 -3.2 0M206.8 384.8q1.8 -1.9 3.7 0q-1.8 1.9 -3.7 0M210.9 384.8q1.4 -4.5 2.8 0q-1.4 4.5 -2.8 0M214.6 384.8q2.1 -2.2 4.2 0q-2.1 2.2 -4.2 0M223.8 384.8q2.2 -2.2 4.5 0q-2.2 2.2 -4.5 0M231.8 384.8q1.2 -1.9 2.4 0q-1.2 1.9 -2.4 0M234.8 384.8q1.8 -2.7 3.6 0q-1.8 2.7 -3.6 0M242.7 384.8q2.1 -2.1 4.2 0q-2.1 2.1 -4.2 0M252.4 384.8q1.3 -3.8 2.6 0q-1.3 3.8 -2.6 0M255.9 384.8q2.2 -4.2 4.4 0q-2.2 4.2 -4.4 0M260.9 384.8q1.2 -1.7 2.4 0q-1.2 1.7 -2.4 0M264.3 384.8q1.9 -2.4 3.8 0q-1.9 2.4 -3.8 0M269.0 384.8q1.4 -2.1 2.9 0q-1.4 2.1 -2.9 0M272.6 384.8q1.4 -3.3 2.7 0q-1.4 3.3 -2.7 0M276.1 384.8q1.4 -4.4 2.8 0q-1.4 4.4 -2.8 0M279.2 384.8q1.4 -2.9 2.8 0q-1.4 2.9 -2.8 0M282.1 384.8q1.5 -3.3 3.0 0q-1.5 3.3 -3.0 0M285.2 384.8q2.1 -4.5 4.2 0q-2.1 4.5 -4.2 0M290.2 384.8q1.8 -2.0 3.5 0q-1.8 2.0 -3.5 0M293.7 384.8q2.1 -3.7 4.3 0q-2.1 3.7 -4.3 0M299.0 384.8q1.8 -3.0 3.7 0q-1.8 3.0 -3.7 0M303.4 384.8q2.2 -1.8 4.5 0q-2.2 1.8 -4.5 0M308.4 384.8q2.1 -3.8 4.3 0q-2.1 3.8 -4.3 0M319.1 384.8q1.9 -4.3 3.8 0q-1.9 4.3 -3.8 0M323.7 384.8q2.0 -4.2 4.0 0q-2.0 4.2 -4.0 0M328.3 384.8q1.5 -3.3 3.1 0q-1.5 3.3 -3.1 0M332.0 384.8q1.8 -4.6 3.7 0q-1.8 4.6 -3.7 0M336.5 384.8q1.5 -3.8 3.1 0q-1.5 3.8 -3.1 0M340.2 384.8q2.1 -1.9 4.1 0q-2.1 1.9 -4.1 0M345.1 384.8q1.8 -3.0 3.6 0q-1.8 3.0 -3.6 0M348.9 384.8q1.7 -3.4 3.3 0q-1.7 3.4 -3.3 0M353.2 384.8q1.1 -2.5 2.2 0q-1.1 2.5 -2.2 0M356.1 384.8q1.3 -4.3 2.6 0q-1.3 4.3 -2.6 0M359.3 384.8q2.1 -2.6 4.3 0q-2.1 2.6 -4.3 0M364.2 384.8q1.6 -4.0 3.2 0q-1.6 4.0 -3.2 0M371.9 384.8q1.5 -2.0 2.9 0q-1.5 2.0 -2.9 0M380.7 384.8q2.2 -2.4 4.4 0q-2.2 2.4 -4.4 0M385.3 384.8q1.4 -2.2 2.8 0q-1.4 2.2 -2.8 0M388.5 384.8q1.7 -2.5 3.3 0q-1.7 2.5 -3.3 0M396.5 384.8q1.1 -4.2 2.3 0q-1.1 4.2 -2.3 0M398.8 384.8q1.8 -2.5 3.5 0q-1.8 2.5 -3.5 0M403.1 384.8q1.3 -3.0 2.5 0q-1.3 3.0 -2.5 0M408.6 384.8q1.2 -3.5 2.3 0q-1.2 3.5 -2.3 0M411.3 384.8q1.9 -4.0 3.7 0q-1.9 4.0 -3.7 0M416.0 384.8q1.3 -3.0 2.7 0q-1.3 3.0 -2.7 0M418.8 384.8q1.6 -3.7 3.3 0q-1.6 3.7 -3.3 0M422.3 384.8q1.5 -3.7 3.0 0q-1.5 3.7 -3.0 0M425.8 384.8q2.0 -2.8 3.9 0q-2.0 2.8 -3.9 0M437.8 384.8q1.6 -3.5 3.2 0q-1.6 3.5 -3.2 0M442.0 384.8q1.8 -4.2 3.5 0q-1.8 4.2 -3.5 0M450.1 384.8q1.3 -3.8 2.7 0q-1.3 3.8 -2.7 0M453.6 384.8q1.9 -2.2 3.9 0q-1.9 2.2 -3.9 0M464.3 384.8q2.0 -2.6 4.0 0q-2.0 2.6 -4.0 0M472.6 384.8q1.6 -3.3 3.2 0q-1.6 3.3 -3.2 0M476.6 384.8q1.1 -4.0 2.3 0q-1.1 4.0 -2.3 0M481.6 384.8q2.0 -2.0 4.0 0q-2.0 2.0 -4.0 0M485.7 384.8q1.9 -4.1 3.9 0q-1.9 4.1 -3.9 0M496.6 384.8q1.7 -2.5 3.4 0q-1.7 2.5 -3.4 0M500.8 384.8q1.7 -4.1 3.4 0q-1.7 4.1 -3.4 0M504.7 384.8q1.5 -4.1 3.1 0q-1.5 4.1 -3.1 0M508.7 384.8q2.1 -4.5 4.2 0q-2.1 4.5 -4.2 0M513.4 384.8q1.3 -3.2 2.7 0q-1.3 3.2 -2.7 0M516.5 384.8q1.1 -4.5 2.3 0q-1.1 4.5 -2.3 0M519.3 384.8q2.0 -3.3 4.0 0q-2.0 3.3 -4.0 0M523.9 384.8q1.2 -3.2 2.4 0q-1.2 3.2 -2.4 0M532.3 384.8q1.6 -2.0 3.3 0q-1.6 2.0 -3.3 0M541.6 384.8q1.5 -2.2 2.9 0q-1.5 2.2 -2.9 0M549.8 384.8q1.4 -3.7 2.7 0q-1.4 3.7 -2.7 0M552.8 384.8q1.8 -1.9 3.6 0q-1.8 1.9 -3.6 0M557.2 384.8q1.7 -2.4 3.4 0q-1.7 2.4 -3.4 0M560.8 384.8q1.6 -2.7 3.2 0q-1.6 2.7 -3.2 0M564.4 384.8q1.3 -2.2 2.6 0q-1.3 2.2 -2.6 0M567.6 384.8q1.7 -4.2 3.4 0q-1.7 4.2 -3.4 0M574.5 384.8q2.0 -4.3 4.1 0q-2.0 4.3 -4.1 0M578.9 384.8q2.2 -2.3 4.3 0q-2.2 2.3 -4.3 0M586.8 384.8q1.9 -2.4 3.9 0q-1.9 2.4 -3.9 0M596.9 384.8q1.9 -1.7 3.8 0q-1.9 1.7 -3.8 0M600.9 384.8q2.1 -4.5 4.3 0q-2.1 4.5 -4.3 0M605.3 384.8q2.0 -3.1 3.9 0q-2.0 3.1 -3.9 0M610.0 384.8q1.2 -1.9 2.4 0q-1.2 1.9 -2.4 0M612.4 384.8q1.7 -3.3 3.4 0q-1.7 3.3 -3.4 0M615.9 384.8q1.3 -4.1 2.7 0q-1.3 4.1 -2.7 0M621.9 384.8q2.2 -3.0 4.4 0q-2.2 3.0 -4.4 0M627.1 384.8q1.6 -3.1 3.3 0q-1.6 3.1 -3.3 0M630.8 384.8q1.1 -3.7 2.2 0q-1.1 3.7 -2.2 0M633.9 384.8q1.6 -3.8 3.2 0q-1.6 3.8 -3.2 0M637.5 384.8q1.3 -3.1 2.6 0q-1.3 3.1 -2.6 0M645.3 384.8q2.1 -3.5 4.2 0q-2.1 3.5 -4.2 0M649.9 384.8q1.7 -4.5 3.4 0q-1.7 4.5 -3.4 0M654.1 384.8q2.1 -3.8 4.3 0q-2.1 3.8 -4.3 0M668.3 384.8q2.0 -3.9 4.0 0q-2.0 3.9 -4.0 0M672.6 384.8q1.2 -2.6 2.4 0q-1.2 2.6 -2.4 0M675.5 384.8q1.5 -3.5 3.0 0q-1.5 3.5 -3.0 0M122 393.2H678M122.0 393.2q1.7 -4.4 3.5 0q-1.7 4.4 -3.5 0M126.0 393.2q1.8 -2.2 3.6 0q-1.8 2.2 -3.6 0M130.0 393.2q2.0 -1.9 4.0 0q-2.0 1.9 -4.0 0M134.3 393.2q2.0 -3.7 4.1 0q-2.0 3.7 -4.1 0M144.3 393.2q1.8 -2.1 3.6 0q-1.8 2.1 -3.6 0M147.9 393.2q1.2 -2.2 2.3 0q-1.2 2.2 -2.3 0M150.5 393.2q1.6 -2.9 3.3 0q-1.6 2.9 -3.3 0M154.6 393.2q1.8 -3.1 3.7 0q-1.8 3.1 -3.7 0M159.0 393.2q1.4 -4.6 2.8 0q-1.4 4.6 -2.8 0M167.6 393.2q1.4 -2.5 2.7 0q-1.4 2.5 -2.7 0M183.0 393.2q1.3 -4.3 2.7 0q-1.3 4.3 -2.7 0M189.7 393.2q1.8 -3.9 3.6 0q-1.8 3.9 -3.6 0M193.6 393.2q1.5 -4.5 3.0 0q-1.5 4.5 -3.0 0M197.3 393.2q1.4 -1.9 2.8 0q-1.4 1.9 -2.8 0M202.9 393.2q1.6 -2.2 3.2 0q-1.6 2.2 -3.2 0M206.8 393.2q1.8 -1.9 3.7 0q-1.8 1.9 -3.7 0M210.9 393.2q1.4 -4.5 2.8 0q-1.4 4.5 -2.8 0M214.6 393.2q2.1 -2.2 4.2 0q-2.1 2.2 -4.2 0M223.8 393.2q2.2 -2.2 4.5 0q-2.2 2.2 -4.5 0M231.8 393.2q1.2 -1.9 2.4 0q-1.2 1.9 -2.4 0M234.8 393.2q1.8 -2.7 3.6 0q-1.8 2.7 -3.6 0M242.7 393.2q2.1 -2.1 4.2 0q-2.1 2.1 -4.2 0M252.4 393.2q1.3 -3.8 2.6 0q-1.3 3.8 -2.6 0M255.9 393.2q2.2 -4.2 4.4 0q-2.2 4.2 -4.4 0M260.9 393.2q1.2 -1.7 2.4 0q-1.2 1.7 -2.4 0M264.3 393.2q1.9 -2.4 3.8 0q-1.9 2.4 -3.8 0M269.0 393.2q1.4 -2.1 2.9 0q-1.4 2.1 -2.9 0M272.6 393.2q1.4 -3.3 2.7 0q-1.4 3.3 -2.7 0M276.1 393.2q1.4 -4.4 2.8 0q-1.4 4.4 -2.8 0M279.2 393.2q1.4 -2.9 2.8 0q-1.4 2.9 -2.8 0M282.1 393.2q1.5 -3.3 3.0 0q-1.5 3.3 -3.0 0M285.2 393.2q2.1 -4.5 4.2 0q-2.1 4.5 -4.2 0M290.2 393.2q1.8 -2.0 3.5 0q-1.8 2.0 -3.5 0M293.7 393.2q2.1 -3.7 4.3 0q-2.1 3.7 -4.3 0M299.0 393.2q1.8 -3.0 3.7 0q-1.8 3.0 -3.7 0M303.4 393.2q2.2 -1.8 4.5 0q-2.2 1.8 -4.5 0M308.4 393.2q2.1 -3.8 4.3 0q-2.1 3.8 -4.3 0M319.1 393.2q1.9 -4.3 3.8 0q-1.9 4.3 -3.8 0M323.7 393.2q2.0 -4.2 4.0 0q-2.0 4.2 -4.0 0M328.3 393.2q1.5 -3.3 3.1 0q-1.5 3.3 -3.1 0M332.0 393.2q1.8 -4.6 3.7 0q-1.8 4.6 -3.7 0M336.5 393.2q1.5 -3.8 3.1 0q-1.5 3.8 -3.1 0M340.2 393.2q2.1 -1.9 4.1 0q-2.1 1.9 -4.1 0M345.1 393.2q1.8 -3.0 3.6 0q-1.8 3.0 -3.6 0M348.9 393.2q1.7 -3.4 3.3 0q-1.7 3.4 -3.3 0M353.2 393.2q1.1 -2.5 2.2 0q-1.1 2.5 -2.2 0M356.1 393.2q1.3 -4.3 2.6 0q-1.3 4.3 -2.6 0M359.3 393.2q2.1 -2.6 4.3 0q-2.1 2.6 -4.3 0M364.2 393.2q1.6 -4.0 3.2 0q-1.6 4.0 -3.2 0M371.9 393.2q1.5 -2.0 2.9 0q-1.5 2.0 -2.9 0M380.7 393.2q2.2 -2.4 4.4 0q-2.2 2.4 -4.4 0M385.3 393.2q1.4 -2.2 2.8 0q-1.4 2.2 -2.8 0M388.5 393.2q1.7 -2.5 3.3 0q-1.7 2.5 -3.3 0M396.5 393.2q1.1 -4.2 2.3 0q-1.1 4.2 -2.3 0M398.8 393.2q1.8 -2.5 3.5 0q-1.8 2.5 -3.5 0M403.1 393.2q1.3 -3.0 2.5 0q-1.3 3.0 -2.5 0M408.6 393.2q1.2 -3.5 2.3 0q-1.2 3.5 -2.3 0M411.3 393.2q1.9 -4.0 3.7 0q-1.9 4.0 -3.7 0M416.0 393.2q1.3 -3.0 2.7 0q-1.3 3.0 -2.7 0M418.8 393.2q1.6 -3.7 3.3 0q-1.6 3.7 -3.3 0M422.3 393.2q1.5 -3.7 3.0 0q-1.5 3.7 -3.0 0M425.8 393.2q2.0 -2.8 3.9 0q-2.0 2.8 -3.9 0M437.8 393.2q1.6 -3.5 3.2 0q-1.6 3.5 -3.2 0M442.0 393.2q1.8 -4.2 3.5 0q-1.8 4.2 -3.5 0M450.1 393.2q1.3 -3.8 2.7 0q-1.3 3.8 -2.7 0M453.6 393.2q1.9 -2.2 3.9 0q-1.9 2.2 -3.9 0M464.3 393.2q2.0 -2.6 4.0 0q-2.0 2.6 -4.0 0M472.6 393.2q1.6 -3.3 3.2 0q-1.6 3.3 -3.2 0M476.6 393.2q1.1 -4.0 2.3 0q-1.1 4.0 -2.3 0M481.6 393.2q2.0 -2.0 4.0 0q-2.0 2.0 -4.0 0M485.7 393.2q1.9 -4.1 3.9 0q-1.9 4.1 -3.9 0M496.6 393.2q1.7 -2.5 3.4 0q-1.7 2.5 -3.4 0M500.8 393.2q1.7 -4.1 3.4 0q-1.7 4.1 -3.4 0M504.7 393.2q1.5 -4.1 3.1 0q-1.5 4.1 -3.1 0M508.7 393.2q2.1 -4.5 4.2 0q-2.1 4.5 -4.2 0M513.4 393.2q1.3 -3.2 2.7 0q-1.3 3.2 -2.7 0M516.5 393.2q1.1 -4.5 2.3 0q-1.1 4.5 -2.3 0M519.3 393.2q2.0 -3.3 4.0 0q-2.0 3.3 -4.0 0M523.9 393.2q1.2 -3.2 2.4 0q-1.2 3.2 -2.4 0M532.3 393.2q1.6 -2.0 3.3 0q-1.6 2.0 -3.3 0M541.6 393.2q1.5 -2.2 2.9 0q-1.5 2.2 -2.9 0M549.8 393.2q1.4 -3.7 2.7 0q-1.4 3.7 -2.7 0M552.8 393.2q1.8 -1.9 3.6 0q-1.8 1.9 -3.6 0M557.2 393.2q1.7 -2.4 3.4 0q-1.7 2.4 -3.4 0M560.8 393.2q1.6 -2.7 3.2 0q-1.6 2.7 -3.2 0M564.4 393.2q1.3 -2.2 2.6 0q-1.3 2.2 -2.6 0M567.6 393.2q1.7 -4.2 3.4 0q-1.7 4.2 -3.4 0M574.5 393.2q2.0 -4.3 4.1 0q-2.0 4.3 -4.1 0M578.9 393.2q2.2 -2.3 4.3 0q-2.2 2.3 -4.3 0M586.8 393.2q1.9 -2.4 3.9 0q-1.9 2.4 -3.9 0M596.9 393.2q1.9 -1.7 3.8 0q-1.9 1.7 -3.8 0M600.9 393.2q2.1 -4.5 4.3 0q-2.1 4.5 -4.3 0M605.3 393.2q2.0 -3.1 3.9 0q-2.0 3.1 -3.9 0M610.0 393.2q1.2 -1.9 2.4 0q-1.2 1.9 -2.4 0M612.4 393.2q1.7 -3.3 3.4 0q-1.7 3.3 -3.4 0M615.9 393.2q1.3 -4.1 2.7 0q-1.3 4.1 -2.7 0M621.9 393.2q2.2 -3.0 4.4 0q-2.2 3.0 -4.4 0M627.1 393.2q1.6 -3.1 3.3 0q-1.6 3.1 -3.3 0M630.8 393.2q1.1 -3.7 2.2 0q-1.1 3.7 -2.2 0M633.9 393.2q1.6 -3.8 3.2 0q-1.6 3.8 -3.2 0M637.5 393.2q1.3 -3.1 2.6 0q-1.3 3.1 -2.6 0M645.3 393.2q2.1 -3.5 4.2 0q-2.1 3.5 -4.2 0M649.9 393.2q1.7 -4.5 3.4 0q-1.7 4.5 -3.4 0M654.1 393.2q2.1 -3.8 4.3 0q-2.1 3.8 -4.3 0M668.3 393.2q2.0 -3.9 4.0 0q-2.0 3.9 -4.0 0M672.6 393.2q1.2 -2.6 2.4 0q-1.2 2.6 -2.4 0M675.5 393.2q1.5 -3.5 3.0 0q-1.5 3.5 -3.0 0" fill="none" stroke="#5e6270" stroke-width="1"/>
  <rect x="121" y="363" width="37" height="7.5" fill="#fff" fill-opacity=".85"/>
  <rect x="276" y="363" width="81" height="7.5" fill="#fff" fill-opacity=".6"/>
  <rect x="362" y="363" width="96" height="7.5" fill="#fff" fill-opacity=".85"/>
  <path d="M360.5 363v35" stroke="#5d6a7e" stroke-width="1.2"/>
 </g>
 <rect x="120.5" y="362.5" width="565" height="35.3" rx="2.5" fill="none" stroke="#5b6678" stroke-width="1"/>
</svg>
<div class="t cl" style="left:121.5px;top:363px">Fade out</div>
<div class="t cl" style="left:277px;top:363px;width:80px;overflow:hidden">Risitas on Linux.mp4</div>
<div class="t cl" style="left:363px;top:363px">Fade to Black / Fade out</div>

<!-- playhead -->
<svg class="a" style="left:243px;top:247px" width="11" height="6" viewBox="243 247 11 6"><path d="M243.5 247.5h10l-5 5z" fill="#2a2a2a"/></svg>
<div class="a" style="left:248px;top:250px;width:1px;height:186px;background:#222"></div>
<!-- hscroll timeline -->
<div class="a" style="left:2px;top:436px;width:676px;height:11px;background:#efeeed"></div>
<svg class="a" style="left:50px;top:434px" width="630" height="14" viewBox="50 434 630 14">
 <rect x="52.8" y="436.6" width="624.5" height="9.4" rx="4.7" fill="#dddcda" stroke="#c6c4c1" stroke-width=".8"/>
 <rect x="53.2" y="437" width="9" height="8.6" rx="4.3" fill="#f4f4f3"/>
 <path d="M59 439.6l-1.6 1.7 1.6 1.7" fill="none" stroke="#999" stroke-width=".7"/>
 <rect x="667.5" y="437" width="9.5" height="8.6" rx="4.3" fill="#f7f7f6" stroke="#c6c4c1" stroke-width=".6"/>
 <path d="M671 439.6l1.6 1.7-1.6 1.7" fill="none" stroke="#555" stroke-width=".9"/>
 <rect x="62.2" y="437" width="279" height="8.6" rx="4.3" fill="#f8f8f7" stroke="#b9b7b4" stroke-width=".8"/>
 <path d="M199.5 439.5v3.6M201.5 439.5v3.6M203.5 439.5v3.6" stroke="#999" stroke-width=".6"/>
</svg>
<!-- status bar -->
<div class="a" style="left:0;top:447px;width:680px;height:1px;background:#dad8d5"></div>
<svg class="a" style="left:2px;top:454px" width="14" height="14" viewBox="2 454 14 14">
 <circle cx="8.5" cy="460.5" r="5.6" fill="#2f6fc0"/><rect x="7.8" y="459" width="1.5" height="4.5" fill="#fff"/><circle cx="8.5" cy="457.5" r=".9" fill="#fff"/>
</svg>
<div class="t st" style="left:18px;top:453px">risitas-talks-about-linux-subs.mp4:</div>
<div class="t st" style="left:18px;top:461px">Position:00:00:00:00 Duration:00:03:27:02</div>
<div class="t" style="left:543.5px;top:456.2px;font-size:10.82px;color:#4a4a4a">00:00:52:10 / 00:03:27:02</div>
<svg class="a" style="left:668px;top:460px" width="7" height="6" viewBox="668 460 7 6"><path d="M668.5 461.5h5l-2.5 3z" fill="#666"/></svg>

<!-- status icons -->
<svg class="a" style="left:190px;top:450px" width="350" height="22" viewBox="190 450 350 22">
 <rect x="195" y="453.5" width="13.5" height="14" rx="2" fill="#9cc2ee" stroke="#4d7fc2" stroke-width=".9"/>
 <rect x="198" y="456" width="8" height="5" fill="#5aa08a"/><rect x="197" y="461" width="10" height="4" fill="#3d63a8"/>
 <path d="M214 462h11v2.5h-11z" fill="#3d6fb0"/><path d="M217 460h5v2h-5z" fill="#3d6fb0"/>
 <path d="M232 462h10v2.5h-10z" fill="#aaa"/><path d="M234 459.5h6v2.5h-6z" fill="#aaa"/>
 <rect x="250" y="454" width="1" height="13" fill="#d8d6d3"/>
 <rect x="256" y="453.5" width="13.5" height="14" rx="2" fill="#9cc2ee" stroke="#4d7fc2" stroke-width=".9"/>
 <path d="M260 456v9l2.2-2 1.6 3 1.3-.6-1.5-3h3z" fill="#fff" stroke="#555" stroke-width=".6"/>
 <path d="M278 455l4 6M284 455l-4 6" stroke="#333" stroke-width="1"/><ellipse cx="278.5" cy="464" rx="2" ry="1.6" fill="#111"/><ellipse cx="283.5" cy="464" rx="2" ry="1.6" fill="#111"/>
 <path d="M292.5 457.5h5v-2.5l5 5.5-5 5.5v-2.5h-5z" fill="#f4f4f4" stroke="#aaa" stroke-width=".9"/>
 <rect x="311" y="454" width="1" height="13" fill="#d8d6d3"/>
 <path d="M318 455h10.5v11h-10.5z" fill="#fff" stroke="#8fa6c4" stroke-width=".9"/><path d="M321 457v7M320 462.5l1 1.5 1-1.5" stroke="#333" stroke-width=".8" fill="none"/>
 <circle cx="340.5" cy="459.5" r="4.3" fill="#e6eef8" stroke="#7d93b0" stroke-width="1"/><path d="M338 459.5h5" stroke="#7d93b0" stroke-width="1"/><path d="M343.5 462.5l3.5 3.5" stroke="#8c97a5" stroke-width="1.6"/>
 <path d="M353 460.5h30" stroke="#d5d3d0" stroke-width="2"/>
 <path d="M388 460.5h33" stroke="#e2623a" stroke-width="2.6" stroke-linecap="round"/>
 <path d="M380 455.5h8v9l-4 3.5-4-3.5z" fill="#fafafa" stroke="#a9a7a4" stroke-width=".8"/>
 <circle cx="430.5" cy="459.5" r="4.3" fill="#e6eef8" stroke="#7d93b0" stroke-width="1"/><path d="M428 459.5h5M430.5 457v5" stroke="#7d93b0" stroke-width="1"/><path d="M433.5 462.5l3.5 3.5" stroke="#8c97a5" stroke-width="1.6"/>
 <rect x="444" y="454" width="1" height="13" fill="#d8d6d3"/>
 <rect x="452.5" y="456" width="9.5" height="4" fill="#3f5269"/><path d="M452.5 463h7l-1.5-1.5M452.5 463h7l-1.5 1.5" fill="none" stroke="#555" stroke-width=".9"/>
 <rect x="468.5" y="453.5" width="13.5" height="14" rx="2" fill="#9cc2ee" stroke="#4d7fc2" stroke-width=".9"/>
 <rect x="471" y="457.5" width="8.5" height="6" fill="#4a2f3a"/><path d="M471 458.3h8.5M471 462.7h8.5" stroke="#a88" stroke-width=".5" stroke-dasharray=".7 .7"/>
 <rect x="486" y="453.5" width="13.5" height="14" rx="2" fill="#9cc2ee" stroke="#4d7fc2" stroke-width=".9"/>
 <path d="M488 460.5h9.5" stroke="#2b3f63" stroke-width="1"/><path d="M490 458v5M492.5 456.5v8M495 458v5" stroke="#2b3f63" stroke-width="1.2"/>
 <rect x="506" y="457.5" width="9" height="6" fill="#5a3a35"/><rect x="510" y="459.5" width="3" height="2" fill="#ddd"/>
 <rect x="521.5" y="453.5" width="13.5" height="14" rx="2" fill="#9cc2ee" stroke="#4d7fc2" stroke-width=".9"/>
 <path d="M524 456.5l3.5 4-3.5 4zM532.5 456.5l-3.5 4 3.5 4z" fill="#22344f"/><path d="M528.2 455v11" stroke="#22344f" stroke-width=".8"/>
</svg>
</body></html>
